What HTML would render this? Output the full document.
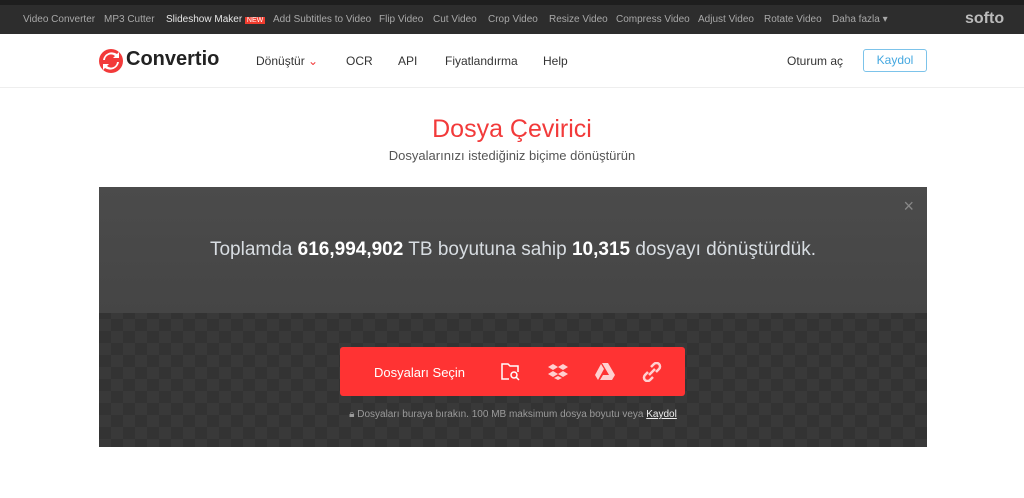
<!DOCTYPE html>
<html><head><meta charset="utf-8"><style>
*{margin:0;padding:0;box-sizing:border-box}
body{width:1024px;height:498px;overflow:hidden;background:#fff;font-family:"Liberation Sans",sans-serif;position:relative}
.strip{position:absolute;left:0;top:0;width:1024px;height:5px;background:#1e1e1e}
.top{position:absolute;left:0;top:5px;width:1024px;height:29px;background:#2d2d2d;font-size:10px;color:#a8a8a8}
.top span{position:absolute;top:9px;white-space:nowrap}
.hdr{position:absolute;left:0;top:34px;width:1024px;height:54px;border-bottom:1px solid #eee;font-size:12px;color:#333}
.hdr .n{position:absolute;top:20px}
.logo{position:absolute;left:99px;top:49px}
h1{position:absolute;left:0;width:1024px;top:115px;text-align:center;font-weight:normal;font-size:25px;color:#f23a3a}
.sub{position:absolute;left:0;width:1024px;top:148px;text-align:center;font-size:13px;color:#555}
.panel{position:absolute;left:99px;top:187px;width:828px;height:260px;background-color:#333;background-image:linear-gradient(45deg,#393939 25%,transparent 25%,transparent 75%,#393939 75%),linear-gradient(45deg,#393939 25%,transparent 25%,transparent 75%,#393939 75%);background-size:24px 24px;background-position:0 0,12px 12px}
.ptop{position:absolute;left:0;top:0;width:828px;height:126px;background:linear-gradient(#4b4b4b,#454545)}
.stat{position:absolute;left:0;width:828px;top:52px;text-align:center;font-size:19px;color:#d8dde2}
.stat b{color:#fff}
.btn{position:absolute;left:241px;top:160px;width:345px;height:49px;background:#ff3333;border-radius:3px}
.drop{position:absolute;left:0;width:828px;top:222px;text-align:center;font-size:10px;color:#9a9a9a}
</style></head><body>
<div class="strip"></div>
<div class="top">
<span style="left:23px">Video Converter</span><span style="left:104px">MP3 Cutter</span>
<span style="left:166px;color:#e6e6e6">Slideshow Maker <b style="background:#f03c2e;color:#fff;font-size:7px;padding:0 2px;font-weight:normal">NEW</b></span>
<span style="left:273px">Add Subtitles to Video</span><span style="left:379px">Flip Video</span><span style="left:433px">Cut Video</span><span style="left:488px">Crop Video</span><span style="left:549px">Resize Video</span><span style="left:616px">Compress Video</span><span style="left:698px">Adjust Video</span><span style="left:764px">Rotate Video</span><span style="left:832px">Daha fazla ▾</span>
<span style="left:965px;top:5px;font-size:16px;font-weight:bold;color:#bbb">softo</span>
</div>
<div class="hdr">
<span class="n" style="left:256px">Dönüştür <span style="color:#f23a3a">⌄</span></span><span class="n" style="left:346px">OCR</span><span class="n" style="left:398px">API</span><span class="n" style="left:445px">Fiyatlandırma</span><span class="n" style="left:543px">Help</span><span class="n" style="left:787px">Oturum aç</span>
<span style="position:absolute;left:863px;top:15px;width:64px;height:23px;border:1px solid #7cc3ea;border-radius:3px;color:#45a8e0;text-align:center;line-height:21px">Kaydol</span>
</div>
<svg class="logo" width="24" height="24" viewBox="0 0 24 24"><circle cx="12" cy="12" r="12" fill="#f23a3a"/><path d="M6 11a6 6 0 0 1 10-4l-2 2h6V3l-2 2A9 9 0 0 0 4 11z M18 13a6 6 0 0 1-10 4l2-2H4v6l2-2a9 9 0 0 0 14-6z" fill="#fff"/></svg>
<div style="position:absolute;left:126px;top:48px;font-size:20px;font-weight:bold;color:#222">Convertio</div>
<h1>Dosya Çevirici</h1>
<div class="sub">Dosyalarınızı istediğiniz biçime dönüştürün</div>
<div class="panel">
<div class="ptop"><div class="stat">Toplamda <b>616,994,902</b> TB boyutuna sahip <b>10,315</b> dosyayı dönüştürdük.</div>
<div style="position:absolute;right:13px;top:9px;color:#888;font-size:18px">×</div></div>
<div class="btn">
<span style="position:absolute;left:34px;top:18px;color:#fff;font-size:13px">Dosyaları Seçin</span>
<svg style="position:absolute;left:160px;top:15px" width="22" height="20" viewBox="0 0 22 20" fill="none" stroke="#fff" stroke-width="1.5"><path d="M9 17H2V2h6l2 2h8v6"/><circle cx="14" cy="13" r="3"/><path d="M16 15l3 3"/></svg>
<svg style="position:absolute;left:208px;top:16px" width="20" height="18" viewBox="0 0 20 18" fill="#ffd0d0"><path d="M5 1l5 3-5 3-5-3zM15 1l5 3-5 3-5-3zM5 8l5 3-5 3-5-3zM15 8l5 3-5 3-5-3zM10 13l4 2-4 2-4-2z"/></svg>
<svg style="position:absolute;left:255px;top:16px" width="20" height="18" viewBox="0 0 20 18" fill="#ffd0d0"><path d="M7 0h6l7 12-3 5zM6 1l3 5-6 11-3-5zM5 17l3-5h12l-3 5z"/></svg>
<svg style="position:absolute;left:302px;top:15px" width="20" height="20" viewBox="0 0 20 20" fill="none" stroke="#ffd0d0" stroke-width="2.5"><path d="M9 5l3-3a3 3 0 0 1 5 5l-3 3M11 15l-3 3a3 3 0 0 1-5-5l3-3M7 13l6-6"/></svg>
</div>
<div class="drop">🔒︎ Dosyaları buraya bırakın. 100 MB maksimum dosya boyutu veya <u style="color:#eee">Kaydol</u></div>
</div>
</body></html>
